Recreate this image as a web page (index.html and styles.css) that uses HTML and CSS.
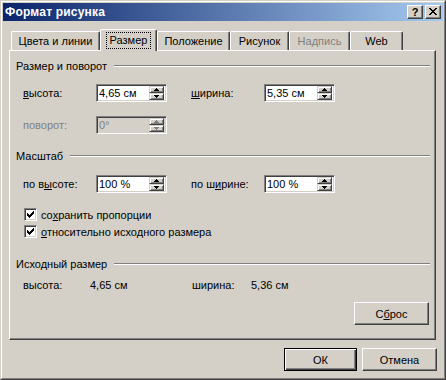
FILE: index.html
```html
<!DOCTYPE html>
<html lang="ru">
<head>
<meta charset="utf-8">
<title>Формат рисунка</title>
<link rel="stylesheet" href="styles.css">
</head>
<body>
<div class="window">
  <div class="window-inner">
    <div class="titlebar">
      <span class="title">Формат рисунка</span>
      <div class="caption-btns">
        <span class="cbtn help">?</span>
        <span class="cbtn close"><svg width="8" height="7" viewBox="0 0 8 7" shape-rendering="crispEdges"><path d="M0 0h2v1h1v1h2V1h1V0h2v1H7v1H6v1H5v1h1v1h1v1h1v1H6V6H5V5H3v1H2v1H0V6h1V5h1V4h1V3H2V2H1V1H0z" fill="#000"/></svg></span>
      </div>
    </div>

    <div class="tabs">
      <div class="tab t1">Цвета и линии</div>
      <div class="tab sel t2"><span class="focus">Размер</span></div>
      <div class="tab t3">Положение</div>
      <div class="tab t4">Рисунок</div>
      <div class="tab t5 disabled">Надпись</div>
      <div class="tab t6">Web</div>
    </div>

    <div class="panel">
      <div class="group-head"><span>Размер и поворот</span><i class="groove"></i></div>
      <div class="row r1">
        <span class="lbl"><u>в</u>ысота:</span>
        <div class="spin"><span class="val">4,65 см</span><span class="spbtns"><b class="up"><svg width="5" height="3" viewBox="0 0 5 3" shape-rendering="crispEdges"><path d="M2 0h1v1h1v1h1v1H0V2h1V1h1z"/></svg></b><b class="down"><svg width="5" height="3" viewBox="0 0 5 3" shape-rendering="crispEdges"><path d="M0 0h5v1H4v1H3v1H2V2H1V1H0z"/></svg></b></span></div>
        <span class="lbl lbl2"><u>ш</u>ирина:</span>
        <div class="spin"><span class="val">5,35 см</span><span class="spbtns"><b class="up"><svg width="5" height="3" viewBox="0 0 5 3" shape-rendering="crispEdges"><path d="M2 0h1v1h1v1h1v1H0V2h1V1h1z"/></svg></b><b class="down"><svg width="5" height="3" viewBox="0 0 5 3" shape-rendering="crispEdges"><path d="M0 0h5v1H4v1H3v1H2V2H1V1H0z"/></svg></b></span></div>
      </div>
      <div class="row r2">
        <span class="lbl gray">поворот:</span>
        <div class="spin off"><span class="val">0°</span><span class="spbtns"><b class="up"><svg width="5" height="3" viewBox="0 0 5 3" shape-rendering="crispEdges"><path d="M2 0h1v1h1v1h1v1H0V2h1V1h1z"/></svg></b><b class="down"><svg width="5" height="3" viewBox="0 0 5 3" shape-rendering="crispEdges"><path d="M0 0h5v1H4v1H3v1H2V2H1V1H0z"/></svg></b></span></div>
      </div>

      <div class="group-head g2"><span>Масштаб</span><i class="groove"></i></div>
      <div class="row r3">
        <span class="lbl">по в<u>ы</u>соте:</span>
        <div class="spin"><span class="val">100 %</span><span class="spbtns"><b class="up"><svg width="5" height="3" viewBox="0 0 5 3" shape-rendering="crispEdges"><path d="M2 0h1v1h1v1h1v1H0V2h1V1h1z"/></svg></b><b class="down"><svg width="5" height="3" viewBox="0 0 5 3" shape-rendering="crispEdges"><path d="M0 0h5v1H4v1H3v1H2V2H1V1H0z"/></svg></b></span></div>
        <span class="lbl lbl2">по ш<u>и</u>рине:</span>
        <div class="spin"><span class="val">100 %</span><span class="spbtns"><b class="up"><svg width="5" height="3" viewBox="0 0 5 3" shape-rendering="crispEdges"><path d="M2 0h1v1h1v1h1v1H0V2h1V1h1z"/></svg></b><b class="down"><svg width="5" height="3" viewBox="0 0 5 3" shape-rendering="crispEdges"><path d="M0 0h5v1H4v1H3v1H2V2H1V1H0z"/></svg></b></span></div>
      </div>
      <div class="check c1"><span class="box"><svg width="7" height="7" viewBox="0 0 7 7" shape-rendering="crispEdges"><path d="M6 0h1v3H6v1H5v1H4v1H3v1H2V6H1V5H0V2h1v1h1v1h1V3h1V2h1V1h1z"/></svg></span><span>со<u>х</u>ранить пропорции</span></div>
      <div class="check c2"><span class="box"><svg width="7" height="7" viewBox="0 0 7 7" shape-rendering="crispEdges"><path d="M6 0h1v3H6v1H5v1H4v1H3v1H2V6H1V5H0V2h1v1h1v1h1V3h1V2h1V1h1z"/></svg></span><span><u>о</u>тносительно исходного размера</span></div>

      <div class="group-head g3"><span>Исходный размер</span><i class="groove"></i></div>
      <div class="info">
        <span class="i1">высота:</span>
        <span class="i2">4,65 см</span>
        <span class="i3">ширина:</span>
        <span class="i4">5,36 см</span>
      </div>
      <div class="reset-row"><span class="btn reset">С<u>б</u>рос</span></div>
    </div>

    <div class="footer">
      <span class="btn ok">ОК</span>
      <span class="btn cancel">Отмена</span>
    </div>
  </div>
</div>
</body>
</html>
```

FILE: styles.css
```css
* { box-sizing: border-box; }
html, body { margin: 0; padding: 0; }
body {
  width: 446px;
  height: 380px;
  overflow: hidden;
  font-family: "Liberation Sans", Arial, sans-serif;
  font-size: 11px;
  color: #000;
  background: #d4d0c8;
}
u { text-decoration: underline; text-underline-offset: 1px; }

.window {
  width: 446px;
  height: 380px;
  border: 1px solid;
  border-color: #d4d0c8 #404040 #404040 #d4d0c8;
  background: #d4d0c8;
}
.window-inner {
  height: 100%;
  border: 1px solid;
  border-color: #fff #808080 #808080 #fff;
  padding: 1px;
}

.titlebar {
  height: 18px;
  display: flex;
  align-items: center;
  justify-content: space-between;
  background: linear-gradient(to right, #0a246a, #a6caf0);
  padding: 0 2px 0 2px;
}
.title {
  color: #fff;
  font-weight: bold;
  font-size: 12px;
  letter-spacing: 0.2px;
  line-height: 18px;
}
.caption-btns { display: flex; gap: 2px; }
.cbtn {
  width: 16px;
  height: 14px;
  background: #d4d0c8;
  border: 1px solid;
  border-color: #fff #404040 #404040 #fff;
  box-shadow: inset -1px -1px #808080;
  display: flex;
  align-items: center;
  justify-content: center;
  font-weight: bold;
  font-size: 11px;
  line-height: 12px;
  padding-bottom: 1px;
}
.cbtn.close svg { display: block; margin-left: -1px; }

.tabs {
  display: flex;
  align-items: flex-end;
  height: 21px;
  margin-top: 8px;
  padding-left: 8px;
  position: relative;
  z-index: 2;
}
.tab {
  height: 19px;
  border-top: 1px solid #fff;
  border-left: 1px solid #fff;
  border-right: 1px solid #404040;
  box-shadow: inset -1px 0 #808080;
  border-top-left-radius: 2px;
  border-top-right-radius: 2px;
  background: #d4d0c8;
  text-align: center;
  line-height: 17px;
  padding-top: 1px;
  white-space: nowrap;
}
.tab.sel {
  height: 22px;
  margin-bottom: -1px;
  padding-top: 2px;
}
.focus {
  display: inline-block;
  border: 1px dotted #000;
  line-height: 15px;
  padding: 0 3px;
}
.t1 { width: 89px; }
.t2 { width: 57px; }
.t3 { width: 73px; }
.t4 { width: 59px; }
.t5 { width: 61px; }
.t6 { width: 53px; }
.tab.disabled { color: #808080; }

.panel {
  width: 427px;
  height: 290px;
  margin-left: 6px;
  border: 1px solid;
  border-color: #fff #404040 #404040 #fff;
  box-shadow: inset -1px -1px #808080;
  padding: 9px 5px 0 6px;
  position: relative;
  z-index: 1;
}

.group-head {
  display: flex;
  height: 13px;
  line-height: 13px;
}
.group-head span { white-space: nowrap; }
.groove {
  flex: 1;
  height: 2px;
  margin: 5px 0 0 7px;
  border-top: 1px solid #808080;
  border-bottom: 1px solid #fff;
}
.g2 { margin-top: 16px; }
.g3 { margin-top: 20px; }

.row {
  display: flex;
  align-items: center;
  height: 18px;
  padding-left: 7px;
}
.r1 { margin-top: 11px; }
.r2 { margin-top: 14px; }
.r3 { margin-top: 12px; }
.lbl { width: 73px; white-space: nowrap; }
.lbl2 { margin-left: 24px; }
.gray { color: #808080; }

.spin {
  width: 71px;
  height: 18px;
  background: #fff;
  border: 1px solid;
  border-color: #808080 #fff #fff #808080;
  box-shadow: inset 1px 1px #404040, inset -1px -1px #d4d0c8;
  display: flex;
  align-items: center;
  padding: 1px 2px 1px 2px;
}
.spin.off { background: #d4d0c8; color: #808080; }
.val { flex: 1; line-height: 14px; padding-left: 0; }
.spbtns {
  display: flex;
  flex-direction: column;
  width: 15px;
  height: 14px;
}
.spbtns b {
  flex: 1;
  display: flex;
  align-items: center;
  justify-content: center;
  background: #d4d0c8;
  border: 1px solid;
  border-color: #d4d0c8 #404040 #404040 #d4d0c8;
  box-shadow: inset 1px 1px #fff, inset -1px -1px #808080;
}
.spbtns svg { display: block; fill: #000; }
.spin.off .spbtns svg { fill: #808080; }

.check {
  display: flex;
  align-items: center;
  height: 13px;
  padding-left: 8px;
  white-space: nowrap;
}
.c1 { margin-top: 15px; }
.c2 { margin-top: 4px; }
.box {
  width: 13px;
  height: 13px;
  background: #fff;
  border: 1px solid;
  border-color: #808080 #fff #fff #808080;
  box-shadow: inset 1px 1px #404040, inset -1px -1px #d4d0c8;
  display: flex;
  align-items: center;
  justify-content: center;
  margin-right: 4px;
}
.box svg { display: block; fill: #000; }

.info {
  display: flex;
  margin-top: 8px;
  padding-left: 7px;
  height: 13px;
  line-height: 13px;
  white-space: nowrap;
}
.i1 { width: 67px; }
.i2 { width: 102px; }
.i3 { width: 59px; }

.reset-row {
  display: flex;
  justify-content: flex-end;
  margin-top: 10px;
  padding-right: 1px;
}

.btn {
  display: flex;
  align-items: center;
  justify-content: center;
  height: 23px;
  background: #d4d0c8;
  border: 1px solid;
  border-color: #fff #404040 #404040 #fff;
  box-shadow: inset -1px -1px #808080;
  white-space: nowrap;
}
.reset { width: 75px; }

.footer {
  display: flex;
  justify-content: flex-end;
  gap: 5px;
  margin-top: 8px;
  padding-right: 6px;
}
.ok {
  width: 73px;
  border: 1px solid #000;
  box-shadow: inset 1px 1px #fff, inset -1px -1px #404040, inset -2px -2px #808080;
}
.cancel { width: 75px; }
```
